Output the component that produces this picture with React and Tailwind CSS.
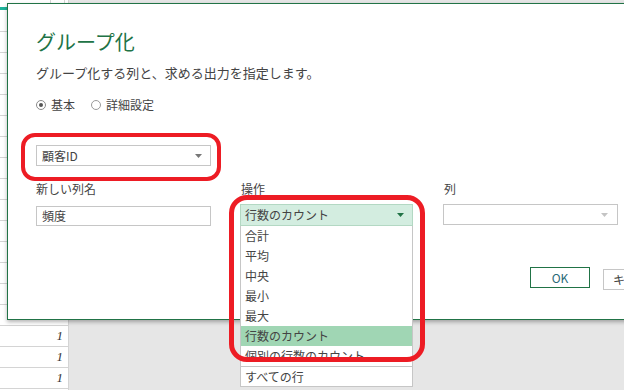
import React from 'react';

const ops = ['合計', '平均', '中央', '最小', '最大', '行数のカウント', '個別の行数のカウント'];

// small down-pointing caret used in the combo boxes
const Caret = ({ color }) => (
  <svg width="7" height="4" viewBox="0 0 7 4">
    <path d="M0 0h7L3.5 4z" fill={color} />
  </svg>
);

export default function App() {
  const rows = Array.from({ length: 18 });

  return (
    <div className="relative w-[624px] h-[390px] overflow-hidden bg-[#e6e6e6] font-['Noto_Sans_CJK_JP','Noto_Sans',sans-serif] text-[#444]">
      {/* spreadsheet column behind the dialog */}
      <div className="w-[69px] h-full bg-white border-r border-[#d4d4d4] flex flex-col">
        <div className="h-[7px] shrink-0 flex">
          <div className="w-[51px] border-r border-[#d4d4d4]" />
          <div className="w-[14px] border-r border-[#d4d4d4]" />
        </div>
        <div className="h-[3px] shrink-0 bg-[#1fb39a]" />
        <div className="h-px shrink-0" />
        {rows.map((_, i) => (
          <div
            key={i}
            className="h-[21px] shrink-0 border-b border-[#d4d4d4] flex items-center justify-end pr-[5px] font-['Liberation_Serif',serif] italic text-[13px] text-[#333]"
          >
            {i >= 15 ? '1' : ''}
          </div>
        ))}
      </div>

      {/* dialog */}
      <div className="absolute left-[7px] top-[3px] w-[706px] h-[317px] bg-white border border-[#217346] shadow-[0_2px_4px_rgba(0,0,0,0.3)] pl-[28px] pr-[29px] pt-[24px] flex flex-col">
        <h1 className="text-[20px] leading-[28px] font-normal text-[#217346]">グループ化</h1>
        <p className="mt-[7px] text-[13px] leading-[20px]">グループ化する列と、求める出力を指定します。</p>

        <div className="mt-[12px] h-[20px] flex items-center text-[12px] leading-[20px]">
          <span className="w-[10px] h-[10px] rounded-full border border-[#8a8a8a] flex items-center justify-center">
            <span className="w-[4px] h-[4px] rounded-full bg-[#555]" />
          </span>
          <span className="ml-[5px]">基本</span>
          <span className="ml-[16px] w-[10px] h-[10px] rounded-full border border-[#9a9a9a]" />
          <span className="ml-[5px]">詳細設定</span>
        </div>

        <div className="mt-[30px] w-[175px] h-[21px] border border-[#c6c6c6] flex items-center justify-between pl-[5px] pr-[8px] text-[12px]">
          <span>顧客ID</span>
          <Caret color="#777" />
        </div>

        <div className="mt-[13px] flex h-[20px] text-[12px] leading-[20px]">
          <div className="w-[175px]">新しい列名</div>
          <div className="ml-[29px] w-[173px] pl-px">操作</div>
          <div className="ml-[30px] w-[175px] pl-px">列</div>
        </div>

        <div className="mt-[5px] flex items-start text-[12px]">
          <div className="mt-[2px] w-[175px] h-[20px] border border-[#c6c6c6] flex items-center pl-[5px]">頻度</div>

          <div className="relative ml-[29px] w-[173px]">
            <div className="h-[22px] bg-[#d3ede0] border border-[#b3d8c3] flex items-center justify-between pl-[4px] pr-[8px]">
              <span>行数のカウント</span>
              <Caret color="#217346" />
            </div>
            <div className="absolute left-0 top-full w-full bg-white border border-t-0 border-[#c6c6c6] z-10">
              {ops.map((op) => (
                <div
                  key={op}
                  className={`h-[20px] leading-[20px] pl-[4px] whitespace-nowrap ${op === '行数のカウント' ? 'bg-[#a0d6b4]' : ''}`}
                >
                  {op}
                </div>
              ))}
              <div className="h-px bg-[#c6c6c6]" />
              <div className="h-[19px] leading-[19px] pl-[4px]">すべての行</div>
            </div>
          </div>

          <div className="ml-[30px] w-[175px] h-[21px] border border-[#c6c6c6] flex items-center justify-end pr-[9px]">
            <Caret color="#c4c4c4" />
          </div>
        </div>

        <div className="mt-[41px] flex justify-end items-start gap-[13px] text-[12px]">
          <button className="w-[60px] h-[21px] border border-[#217346] text-[#2b6a78] leading-[19px]">OK</button>
          <button className="mt-[2px] w-[80px] h-[21px] border border-[#c6c6c6] text-[#444] leading-[19px]">キャンセル</button>
        </div>
      </div>

      {/* red annotation outlines */}
      <div className="absolute left-[21px] top-[133px] w-[200px] h-[48px] border-[4px] border-[#ed1c24] rounded-[14px]" />
      <div className="absolute left-[229px] top-[195px] w-[196px] h-[167px] border-[5px] border-[#ed1c24] rounded-[18px] z-20" />
    </div>
  );
}
